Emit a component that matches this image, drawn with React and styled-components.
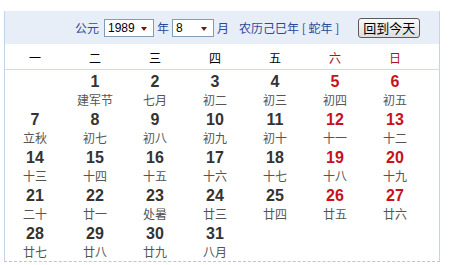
import React from "react";
import styled, { createGlobalStyle } from "styled-components";

const Global = createGlobalStyle`
  html, body { margin: 0; padding: 0; background: #fff; }
  body { font-family: "Noto Sans CJK SC", "Liberation Sans", sans-serif; }
`;

const Page = styled.div`
  padding: 11px 0 0 4px;
`;

const Panel = styled.div`
  width: 436px;
  box-sizing: border-box;
  border-left: 1px solid #c6d3e6;
  border-right: 1px solid #c6d3e6;
  border-bottom: 1px dashed #c4c4c4;
  padding-bottom: 1px;
`;

const Header = styled.div`
  height: 33px;
  background: #e8eef8;
  display: flex;
  align-items: center;
  padding-left: 70px;
  color: #2b4a9a;
  font-size: 12px;
  line-height: 14px;
`;

const Label = styled.span`
  margin: ${(p) => p.$m || "0"};
  white-space: nowrap;
`;

const FakeSelect = styled.div`
  position: relative;
  width: ${(p) => p.$w}px;
  height: 18px;
  box-sizing: border-box;
  border: 1px solid #7f9db9;
  background: #fff;
  color: #000;
  font-family: "Liberation Sans", Arial, sans-serif;
  font-size: 12px;
  line-height: 16px;
  padding-left: 3px;
  &::after {
    content: "";
    position: absolute;
    right: 6px;
    top: 7px;
    border-left: 3px solid transparent;
    border-right: 3px solid transparent;
    border-top: 4px solid #7a1010;
  }
`;

const Button = styled.button`
  margin-left: 19px;
  width: 62px;
  height: 20px;
  box-sizing: border-box;
  padding: 0;
  border: 1px solid #5a5a5a;
  border-radius: 3px;
  background: linear-gradient(#fafafa, #dedede);
  color: #000;
  font-family: "Noto Sans CJK SC", sans-serif;
  font-size: 13px;
  line-height: 16px;
`;

const Grid = styled.div`
  display: grid;
  grid-template-columns: repeat(7, 60px);
`;

const WeekRow = styled.div`
  display: grid;
  grid-template-columns: repeat(7, 60px);
  height: 25px;
  border-bottom: 1px solid #d3dbe6;
  align-items: center;
`;

const WeekDay = styled.div`
  text-align: center;
  font-size: 12px;
  color: ${(p) => (p.$weekend ? "#b01020" : "#000")};
  padding-top: 2px;
`;

const Cell = styled.div`
  height: 38px;
  box-sizing: border-box;
  padding-top: 3px;
  text-align: center;
`;

const Num = styled.div`
  font-family: "Liberation Sans", Arial, sans-serif;
  font-weight: bold;
  font-size: 16px;
  line-height: 18px;
  color: ${(p) => (p.$weekend ? "#c8101e" : "#333")};
`;

const Lunar = styled.div`
  font-size: 12px;
  line-height: 16px;
  margin-top: 1px;
  color: #555;
`;

const lunar = [
  "建军节", "七月", "初二", "初三", "初四", "初五",
  "立秋", "初七", "初八", "初九", "初十", "十一", "十二",
  "十三", "十四", "十五", "十六", "十七", "十八", "十九",
  "二十", "廿一", "处暑", "廿三", "廿四", "廿五", "廿六",
  "廿七", "廿八", "廿九", "八月",
];

const weekdays = ["一", "二", "三", "四", "五", "六", "日"];

export default function App() {
  const cells = [null];
  for (let d = 1; d <= 31; d++) cells.push(d);
  while (cells.length % 7) cells.push(null);
  return (
    <Page>
      <Global />
      <Panel>
        <Header>
          <Label>公元</Label>
          <Label $m="0 0 0 5px" as="div">
            <FakeSelect $w={50}>1989</FakeSelect>
          </Label>
          <Label $m="0 3px">年</Label>
          <FakeSelect $w={42}>8</FakeSelect>
          <Label $m="0 0 0 3px">月</Label>
          <Label $m="0 0 0 10px">农历己巳年 [ 蛇年 ]</Label>
          <Button>回到今天</Button>
        </Header>
        <WeekRow>
          {weekdays.map((w, i) => (
            <WeekDay key={w} $weekend={i >= 5}>{w}</WeekDay>
          ))}
        </WeekRow>
        <Grid>
          {cells.map((d, i) => {
            const weekend = i % 7 >= 5;
            return (
              <Cell key={i}>
                {d && (
                  <>
                    <Num $weekend={weekend}>{d}</Num>
                    <Lunar>{lunar[d - 1]}</Lunar>
                  </>
                )}
              </Cell>
            );
          })}
        </Grid>
      </Panel>
    </Page>
  );
}
